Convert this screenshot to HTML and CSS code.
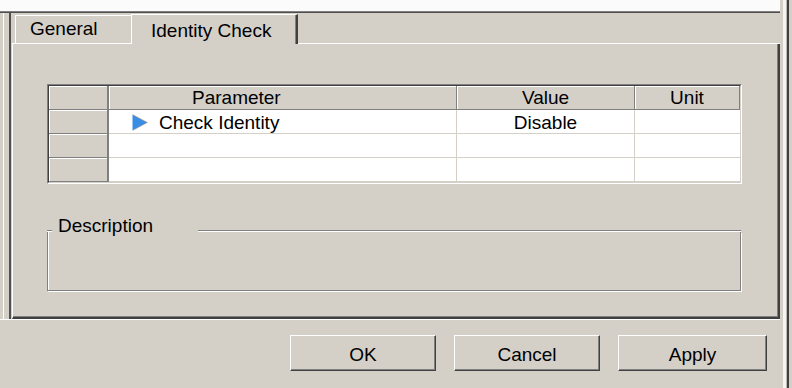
FILE: index.html
```html
<!DOCTYPE html>
<html>
<head>
<meta charset="utf-8">
<link rel="stylesheet" href="styles.css">
</head>
<body>
<div class="app">
  <div class="main">
    <div class="topband"></div>
    <div class="topline"></div>
    <div class="tabarea">
      <div class="lstrip"></div>
      <div class="tabctl">
        <div class="tabrow">
          <div class="tab-lead"></div>
          <div class="tab">General</div>
          <div class="tab active">Identity Check</div>
          <div class="tab-fill"></div>
        </div>
        <div class="page">
          <div class="grid">
            <div class="grid-inner">
              <div class="row">
                <div class="c rh hd"></div>
                <div class="c hd param-h">Parameter</div>
                <div class="c hd">Value</div>
                <div class="c hd last">Unit</div>
              </div>
              <div class="row">
                <div class="c rh"></div>
                <div class="c param">
                  <svg class="arrow" width="16" height="17" viewBox="0 0 16 17"><polygon points="0.5,0.5 15.5,8.5 0.5,16.5" fill="#3a8de4"/><polyline points="0.8,0.6 15.5,8.5 0.8,16.4" fill="none" stroke="#c89a62" stroke-width="0.8" stroke-opacity="0.6"/></svg>
                  <span class="param-text">Check Identity</span>
                </div>
                <div class="c">Disable</div>
                <div class="c last"></div>
              </div>
              <div class="row">
                <div class="c rh"></div>
                <div class="c"></div>
                <div class="c"></div>
                <div class="c last"></div>
              </div>
              <div class="row">
                <div class="c rh"></div>
                <div class="c"></div>
                <div class="c"></div>
                <div class="c last"></div>
              </div>
            </div>
          </div>
          <div class="group">
            <div class="group-head">
              <div class="seg seg-left"></div>
              <div class="group-label">Description</div>
              <div class="seg seg-right"></div>
            </div>
            <div class="group-body"></div>
          </div>
        </div>
      </div>
    </div>
    <div class="sep"></div>
    <div class="buttons">
      <div class="btn">OK</div>
      <div class="btn">Cancel</div>
      <div class="btn btn-apply">Apply</div>
    </div>
  </div>
  <div class="rstrip"></div>
</div>
</body>
</html>
```
FILE: styles.css
```css
* { box-sizing: border-box; }
html, body { margin: 0; padding: 0; }
body {
  width: 792px;
  height: 388px;
  overflow: hidden;
  background: #d4d0c8;
  font-family: "Liberation Sans", Arial, sans-serif;
  font-size: 19px;
  color: #000;
}
.app { display: flex; width: 792px; height: 388px; }
.main { width: 780px; display: flex; flex-direction: column; }
.rstrip {
  width: 12px;
  background: linear-gradient(to right, #d4d0c8 0, #d4d0c8 3px, #f4f4f2 3px, #f4f4f2 6px, #bdbab4 6px, #bdbab4 7px, #404040 7px, #404040 9px, #d4d0c8 9px);
}
.topband { height: 11px; background: #fbfbfb; }
.topline { height: 2px; border-top: 1px solid #808080; border-bottom: 1px solid #505050; }
.tabarea { display: flex; height: 306px; }
.lstrip {
  width: 9px;
  background: linear-gradient(to right, #d4d0c8 0, #d4d0c8 3px, #fff 3px, #fff 4px, #d4d0c8 4px);
}
.tabctl {
  width: 771px;
  border-left: 2px solid #505050;
  padding-left: 1px;
  display: flex;
  flex-direction: column;
}
.tabrow { height: 31px; display: flex; align-items: flex-end; }
.tab-lead { width: 3px; height: 1px; background: #fff; }
.tab-fill { flex: 1; height: 1px; background: #fff; }
.tab {
  width: 116px;
  height: 29px;
  border-top: 1px solid #fff;
  border-left: 1px solid #fff;
  border-bottom: 1px solid #fff;
  padding: 3px 0 0 14px;
  line-height: 20px;
  white-space: nowrap;
}
.tab.active {
  width: 167px;
  height: 30px;
  border-bottom: none;
  border-right: 2px solid #404040;
  box-shadow: inset -1px 0 0 #808080;
  padding: 6px 0 0 19px;
}
.page {
  height: 275px;
  border-left: 1px solid #fff;
  border-right: 2px solid #404040;
  border-bottom: 2px solid #404040;
  box-shadow: inset -1px -1px 0 #808080;
  padding-left: 34px;
  padding-top: 40px;
}
.grid {
  width: 695px;
  border: 1px solid;
  border-color: #808080 #fff #fff #808080;
}
.grid-inner {
  border: 1px solid;
  border-color: #404040 #d4d0c8 #d4d0c8 #404040;
}
.row { display: grid; grid-template-columns: 60px 348px 178px 105px; grid-template-rows: 24px; height: 24px; }
.c {
  background: #fff;
  border-right: 1px solid #d4d0c8;
  border-bottom: 1px solid #d4d0c8;
  line-height: 23px;
  padding-top: 1px;
  text-align: center;
  white-space: nowrap;
  overflow: hidden;
}
.c.last { border-right: none; }
.c.hd {
  background: #d4d0c8;
  border-right: 1px solid #808080;
  border-bottom: 1px solid #808080;
  box-shadow: inset 1px 1px 0 #fff;
  padding-top: 0;
}
.c.hd.last { border-right: 1px solid #808080; }
.c.rh {
  background: #d4d0c8;
  border-right: 2px solid #808080;
  border-bottom: 1px solid #808080;
  box-shadow: inset 1px 1px 0 #fff;
}
.param-h { text-align: left; padding-left: 83px; }
.param { display: flex; align-items: flex-start; gap: 11px; padding: 1px 0 0 23px; text-align: left; }
.arrow { display: block; flex: none; margin-top: 3px; }
.param-text { line-height: 23px; }
.group { width: 694px; margin-top: 36px; }
.group-head { height: 12px; display: flex; align-items: flex-end; }
.seg { height: 2px; border-top: 1px solid #808080; border-bottom: 1px solid #fff; }
.seg-left { width: 5px; }
.seg-right { flex: 1; }
.group-label { line-height: 12px; padding: 0 45px 0 6px; white-space: nowrap; }
.group-body {
  height: 59px;
  border: 1px solid #808080;
  border-top: none;
  box-shadow: inset 1px 0 0 #fff, 1px 1px 0 #fff;
}
.sep { height: 1px; background: #fff; }
.buttons {
  flex: 1;
  display: flex;
  justify-content: flex-end;
  gap: 18px;
  padding: 15px 13px 0 0;
}
.btn {
  width: 146px;
  height: 36px;
  border: 1px solid;
  border-color: #fff #404040 #404040 #fff;
  box-shadow: inset -1px -1px 0 #808080;
  text-align: center;
  line-height: 37px;
}
.btn-apply { width: 149px; }
```
